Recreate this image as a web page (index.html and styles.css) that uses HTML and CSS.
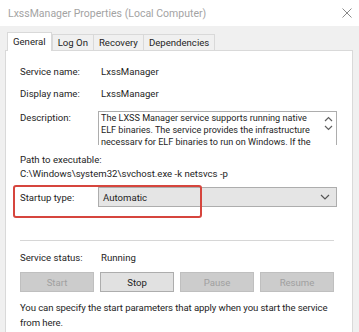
FILE: index.html
```html
<!DOCTYPE html>
<html>
<head>
<meta charset="utf-8">
<link rel="stylesheet" href="styles.css">
</head>
<body>
<div class="window">
  <div class="titlebar">
    <span class="title">LxssManager Properties (Local Computer)</span>
    <svg class="close" width="10" height="10" viewBox="0 0 10 10"><path d="M0.5 0.5L9.5 9.5M9.5 0.5L0.5 9.5" stroke="#8a8a8a" stroke-width="1"/></svg>
  </div>
  <div class="client">
    <div class="tabs">
      <div class="tab active">General</div>
      <div class="tab">Log On</div>
      <div class="tab">Recovery</div>
      <div class="tab">Dependencies</div>
    </div>
    <div class="page">
      <div class="row r1"><span class="label">Service name:</span><span class="value">LxssManager</span></div>
      <div class="row r2"><span class="label">Display name:</span><span class="value">LxssManager</span></div>
      <div class="row r3">
        <span class="label desc-label">Description:</span>
        <div class="textbox">
          <div class="tb-text">
            <div class="tb-line">The LXSS Manager service supports running native</div>
            <div class="tb-line">ELF binaries. The service provides the infrastructure</div>
            <div class="tb-line">necessary for ELF binaries to run on Windows. If the</div>
          </div>
          <div class="tb-scroll">
            <svg width="9" height="6" viewBox="0 0 9 6"><path d="M1 5L4.5 1.5L8 5" fill="none" stroke="#606060" stroke-width="1.2"/></svg>
            <svg width="9" height="6" viewBox="0 0 9 6"><path d="M1 1L4.5 4.5L8 1" fill="none" stroke="#606060" stroke-width="1.2"/></svg>
          </div>
        </div>
      </div>
      <div class="path-label">Path to executable:</div>
      <div class="path">C:\Windows\system32\svchost.exe -k netsvcs -p</div>
      <div class="row startup">
        <span class="label">Startup type:</span>
        <div class="combo">
          <span>Automatic</span>
          <svg width="10" height="6" viewBox="0 0 10 6"><path d="M1 1L5 5L9 1" fill="none" stroke="#555" stroke-width="1.2"/></svg>
        </div>
        <div class="highlight"></div>
      </div>
      <div class="sep"></div>
      <div class="row status"><span class="label">Service status:</span><span class="value">Running</span></div>
      <div class="buttons">
        <div class="btn disabled">Start</div>
        <div class="btn">Stop</div>
        <div class="btn disabled">Pause</div>
        <div class="btn disabled">Resume</div>
      </div>
      <p class="hint">You can specify the start parameters that apply when you start the service<br>from here.</p>
    </div>
  </div>
</div>
</body>
</html>
```
FILE: styles.css
```css
* { box-sizing: border-box; }
html, body { margin: 0; padding: 0; }
body {
  width: 359px;
  height: 332px;
  overflow: hidden;
  font-family: Roboto, "Noto Sans", sans-serif;
  font-size: 9.6px;
  color: #1e1e1e;
  background: #f0f0f0;
}
.window { width: 359px; height: 332px; display: flex; flex-direction: column; }
.titlebar {
  height: 26px;
  background: #fff;
  display: flex;
  align-items: center;
  justify-content: space-between;
  padding: 0 7px 0 8px;
  flex: none;
}
.title { color: #a3a3a3; font-size: 10.5px; }
.client {
  flex: 1;
  background: #f0f0f0;
  padding: 6px 6px 0 5px;
  display: flex;
  flex-direction: column;
  min-height: 0;
}
.tabs { display: flex; height: 18px; align-items: flex-end; padding-left: 2px; position: relative; z-index: 1; }
.tab {
  height: 16px;
  padding: 0 5px;
  border: 1px solid #d9d9d9;
  border-bottom: none;
  margin-left: -1px;
  background: #f0f0f0;
  display: flex;
  align-items: center;
  line-height: 1;
}
.tab.active {
  height: 19px;
  background: #fff;
  margin-bottom: -1px;
  padding: 0 5px;
  margin-left: 0;
  margin-right: 1px;
}
.page {
  flex: 1;
  background: #fff;
  border: 1px solid #d9d9d9;
  border-bottom: none;
  padding: 13px 15px 0 14px;
  position: relative;
}
.row { display: flex; align-items: center; }
.label { width: 78px; flex: none; }
.value { padding-left: 3px; }
.r1 { height: 14px; }
.r2 { height: 14px; margin-top: 8px; }
.r3 { align-items: flex-start; margin-top: 11px; }
.desc-label { margin-top: 1px; line-height: 12px; }
.textbox {
  width: 239px;
  height: 34px;
  border: 1px solid #adadad;
  border-bottom: none;
  display: flex;
  overflow: hidden;
}
.tb-text { flex: 1; padding: 0 0 0 2px; line-height: 12px; overflow: hidden; font-size: 9.1px; }
.tb-line { white-space: nowrap; }
.tb-scroll { width: 16px; flex: none; display: flex; flex-direction: column; align-items: center; gap: 3px; padding-top: 4px; }
.path-label { margin-top: 8px; line-height: 14px; }
.path { line-height: 14px; }
.startup { margin-top: 6px; height: 20px; position: relative; }
.combo {
  width: 239px;
  height: 20px;
  background: #e5e5e5;
  border: 1px solid #adadad;
  display: flex;
  align-items: center;
  justify-content: space-between;
  padding: 0 6px 0 4px;
}
.highlight {
  position: absolute;
  left: -7px;
  top: -2px;
  width: 189px;
  height: 33px;
  border: 2.5px solid #d6453d;
  border-radius: 3px;
}
.sep { height: 1px; background: #d6d6d6; margin-top: 33px; margin-right: 3px; }
.status { margin-top: 9px; height: 14px; }
.buttons { display: flex; gap: 6px; margin-top: 8px; }
.btn {
  width: 74px;
  height: 20px;
  border: 1px solid #adadad;
  background: #e1e1e1;
  display: flex;
  align-items: center;
  justify-content: center;
}
.btn.disabled { background: #cccccc; border-color: #bfbfbf; color: #a0a0a0; }
.hint { margin: 8px 0 0 0; line-height: 15px; white-space: nowrap; letter-spacing: -0.1px; }
```
